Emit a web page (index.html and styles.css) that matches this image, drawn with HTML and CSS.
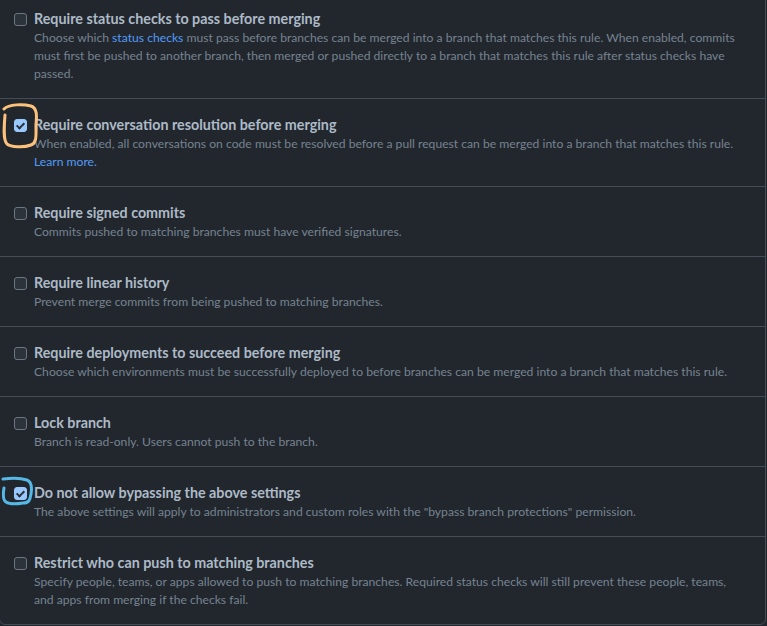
FILE: index.html
```html
<!DOCTYPE html>
<html lang="en">
<head>
  <meta charset="UTF-8">
  <title>Branch protection rule</title>
  <link rel="stylesheet" href="styles.css">
</head>
<body>
  <div class="rules">
    <div class="rule">
      <span class="box"></span>
      <div class="rule-text">
        <div class="rule-title">Require status checks to pass before merging</div>
        <p class="rule-desc">Choose which <a href="#">status checks</a> must pass before branches can be merged into a branch that matches this rule. When enabled, commits must first be pushed to another branch, then merged or pushed directly to a branch that matches this rule after status checks have passed.</p>
      </div>
    </div>

    <div class="rule">
      <span class="box checked"></span>
      <div class="rule-text">
        <div class="rule-title">Require conversation resolution before merging</div>
        <p class="rule-desc">When enabled, all conversations on code must be resolved before a pull request can be merged into a branch that matches this rule. <a href="#">Learn more.</a></p>
      </div>
      <!-- hand drawn highlight -->
      <svg class="mark mark-orange" width="40" height="46" viewBox="0 0 40 46">
        <path d="M3 6 C8 1 22 1 30 3 C36 5 36 12 35 22 C35 32 36 40 30 42 C22 45 10 44 6 41 C2 37 3 24 4 12" fill="none" stroke="#fcc27c" stroke-width="3" stroke-linecap="round"/>
      </svg>
    </div>

    <div class="rule">
      <span class="box"></span>
      <div class="rule-text">
        <div class="rule-title">Require signed commits</div>
        <p class="rule-desc">Commits pushed to matching branches must have verified signatures.</p>
      </div>
    </div>

    <div class="rule">
      <span class="box"></span>
      <div class="rule-text">
        <div class="rule-title">Require linear history</div>
        <p class="rule-desc">Prevent merge commits from being pushed to matching branches.</p>
      </div>
    </div>

    <div class="rule">
      <span class="box"></span>
      <div class="rule-text">
        <div class="rule-title">Require deployments to succeed before merging</div>
        <p class="rule-desc">Choose which environments must be successfully deployed to before branches can be merged into a branch that matches this rule.</p>
      </div>
    </div>

    <div class="rule">
      <span class="box"></span>
      <div class="rule-text">
        <div class="rule-title">Lock branch</div>
        <p class="rule-desc">Branch is read-only. Users cannot push to the branch.</p>
      </div>
    </div>

    <div class="rule">
      <span class="box checked"></span>
      <div class="rule-text">
        <div class="rule-title">Do not allow bypassing the above settings</div>
        <p class="rule-desc">The above settings will apply to administrators and custom roles with the "bypass branch protections" permission.</p>
      </div>
      <svg class="mark mark-blue" width="34" height="30" viewBox="0 0 34 30">
        <path d="M2 3 C10 2 20 2 26 4 C31 6 31 12 30 18 C29 24 28 27 22 27 C16 28 8 28 5 26 C2 24 2 18 3 12" fill="none" stroke="#56b8e6" stroke-width="3" stroke-linecap="round"/>
      </svg>
    </div>

    <div class="rule">
      <span class="box"></span>
      <div class="rule-text">
        <div class="rule-title">Restrict who can push to matching branches</div>
        <p class="rule-desc">Specify people, teams, or apps allowed to push to matching branches. Required status checks will still prevent these people, teams, and apps from merging if the checks fail.</p>
      </div>
    </div>
  </div>
</body>
</html>
```

FILE: styles.css
```css
body {
  margin: 0;
  background: #22272e;
  font-family: Lato, "Noto Sans", sans-serif;
  overflow: hidden;
}
.rules {
  width: 767px;
  margin: -8px 0 0 -1px;
  border: 1px solid #444c56;
  border-radius: 6px;
  box-sizing: border-box;
}
.rule {
  position: relative;
  display: flex;
  gap: 7px;
  padding: 16px 24px 15px 14px;
  border-top: 1px solid #444c56;
}
.rule:first-child {
  border-top: none;
}
.box {
  flex: none;
  width: 11px;
  height: 11px;
  margin-top: 4px;
  border: 1px solid #6e7681;
  border-radius: 3px;
  background: #2d333b;
}
.box.checked {
  border-color: #99c8ff;
  background: #99c8ff;
  position: relative;
}
.box.checked::after {
  content: "";
  position: absolute;
  left: 3px;
  top: 1px;
  width: 3px;
  height: 6px;
  border: solid #2b2f36;
  border-width: 0 2px 2px 0;
  transform: rotate(45deg);
}
.rule-text {
  flex: 1;
}
.rule-title {
  font-size: 14.3px;
  font-weight: bold;
  line-height: 20px;
  color: #adbac7;
}
.rule-desc {
  margin: 0;
  font-size: 12.15px;
  line-height: 18px;
  color: #768390;
}
.rule-desc a {
  color: #539bf5;
  text-decoration: none;
}
.mark {
  position: absolute;
  pointer-events: none;
}
.mark-orange {
  left: 1px;
  top: 4px;
}
.mark-blue {
  left: 1px;
  top: 9px;
}
```
